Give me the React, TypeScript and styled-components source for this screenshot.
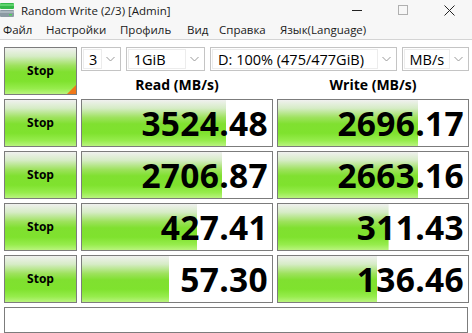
import React from "react";
import styled, { createGlobalStyle } from "styled-components";

const GlobalStyle = createGlobalStyle`
  html, body { margin: 0; padding: 0; background: #ffffff; }
  body { font-family: "Open Sans", "Noto Sans", "DejaVu Sans", sans-serif; color: #000; overflow: hidden; }
`;

const GREEN = `linear-gradient(to bottom, #f0f1ef 0%, #d6ecc6 18%, #9ee25e 38%, #80e030 52%, #7fe22e 72%, #96ec4c 88%, #b9f47e 100%)`;

const Window = styled.div`
  width: 472px;
  height: 333px;
  display: flex;
  flex-direction: column;
  background: #ffffff;
  overflow: hidden;
`;

const TitleBar = styled.div`
  height: 20px;
  display: flex;
  align-items: center;
  background: #f7f7f7;
`;

const AppIcon = styled.svg`
  width: 15px;
  height: 16px;
  margin-left: 0;
  flex: none;
`;

const Title = styled.div`
  margin-left: 6px;
  font-size: 11.5px;
  color: #1a1a1a;
  flex: 1;
  white-space: nowrap;
`;

const Controls = styled.div`
  display: flex;
  align-items: center;
  gap: 0;
  height: 20px;
`;

const ControlBtn = styled.div<{ $w: number }>`
  width: ${(p) => p.$w}px;
  height: 20px;
  display: flex;
  align-items: center;
  justify-content: center;
`;

const MenuBar = styled.div`
  height: 20px;
  display: flex;
  align-items: center;
  background: #f7f7f7;
  border-bottom: 1px solid #d4d4d4;
  padding-left: 3px;
  gap: 0;
`;

const MenuItem = styled.span<{ $w: number }>`
  width: ${(p) => p.$w}px;
  font-size: 11.5px;
  color: #1a1a1a;
  white-space: nowrap;
`;

const Main = styled.div`
  flex: 1;
  display: grid;
  grid-template-columns: 73px 192px 192px;
  grid-template-rows: 48px repeat(4, 48px) 26px;
  column-gap: 4px;
  row-gap: 4px;
  padding: 7px 0 0 4px;
`;

const StopButton = styled.div<{ $corner?: boolean }>`
  position: relative;
  box-sizing: border-box;
  border: 1px solid #7c7c7c;
  background: ${GREEN};
  display: flex;
  align-items: center;
  justify-content: center;
  font-size: 12px;
  font-weight: 700;
  padding-bottom: 1px;
`;

const Corner = styled.div`
  position: absolute;
  right: 0;
  bottom: 0;
  width: 0;
  height: 0;
  border-style: solid;
  border-width: 0 0 9px 9px;
  border-color: transparent transparent #f07818 transparent;
`;

const ControlArea = styled.div`
  grid-column: 2 / span 2;
  display: flex;
  flex-direction: column;
`;

const ComboRow = styled.div`
  display: flex;
  gap: 5px;
  height: 24px;
`;

const Combo = styled.div<{ $w: number }>`
  width: ${(p) => p.$w}px;
  box-sizing: border-box;
  border: 1px solid #c4c4c4;
  background: #fff;
  display: flex;
  align-items: center;
  padding: 1px;
`;

const ComboText = styled.div`
  flex: 1;
  height: 100%;
  box-sizing: border-box;
  border: 1px solid #ececec;
  display: flex;
  align-items: center;
  padding-left: 5px;
  font-size: 14.5px;
  white-space: nowrap;
  overflow: hidden;
`;

const Chevron = styled.svg`
  width: 17px;
  height: 10px;
  flex: none;
`;

const HeaderRow = styled.div`
  flex: 1;
  display: grid;
  grid-template-columns: 192px 192px;
  column-gap: 4px;
  align-items: center;
`;

const Header = styled.div`
  text-align: center;
  font-size: 14px;
  font-weight: 700;
  padding-top: 2px;
`;

const Meter = styled.div`
  box-sizing: border-box;
  border: 1px solid #7c7c7c;
  background-color: #fff;
  background-image: ${GREEN};
  background-repeat: no-repeat;
  display: flex;
  align-items: center;
  justify-content: flex-end;
  padding: 2px 4px 0 0;
  font-size: 33.5px;
  font-weight: 700;
  letter-spacing: 0.3px;
  line-height: 1;
`;

const StatusBar = styled.div`
  grid-column: 1 / span 3;
  box-sizing: border-box;
  border: 1px solid #7c7c7c;
  background: #fff;
  width: 464px;
`;

const results: [number, number][] = [
  [3524.48, 2696.17],
  [2706.87, 2663.16],
  [427.41, 311.43],
  [57.3, 136.46],
];

const ratio = (v: number) => Math.max(0, Math.min(1, Math.log10(v * 10) / 6));

const MeterCell = ({ value }: { value: number }) => (
  <Meter style={{ backgroundSize: `${(ratio(value) * 190).toFixed(1)}px 100%` }}>
    {value.toFixed(2)}
  </Meter>
);

const ChevronIcon = () => (
  <Chevron viewBox="0 0 17 10">
    <polyline points="4.5,3 8.5,7 12.5,3" fill="none" stroke="#9a9a9a" strokeWidth="1" />
  </Chevron>
);

export default function App() {
  return (
    <>
      <GlobalStyle />
      <Window>
        <TitleBar>
          <AppIcon viewBox="0 0 15 16">
            <rect x="0" y="1" width="14" height="6" rx="1" fill="#35b84a" />
            <rect x="0" y="2" width="14" height="2" fill="#5fd36d" />
            <rect x="0" y="8" width="14" height="7" rx="1" fill="#8c9aa3" />
            <rect x="0" y="9" width="14" height="2" fill="#aab6bd" />
            <rect x="9" y="12" width="3" height="1.5" fill="#4cd35a" />
          </AppIcon>
          <Title>Random Write (2/3) [Admin]</Title>
          <Controls>
            <ControlBtn $w={46}>
              <svg width="10" height="10" viewBox="0 0 10 10">
                <line x1="0" y1="5.5" x2="10" y2="5.5" stroke="#222" strokeWidth="1" />
              </svg>
            </ControlBtn>
            <ControlBtn $w={46}>
              <svg width="10" height="10" viewBox="0 0 10 10">
                <rect x="0.5" y="0.5" width="9" height="9" fill="none" stroke="#b0b0b0" strokeWidth="1" />
              </svg>
            </ControlBtn>
            <ControlBtn $w={46}>
              <svg width="11" height="11" viewBox="0 0 11 11">
                <path d="M0.5 0.5 L10.5 10.5 M10.5 0.5 L0.5 10.5" stroke="#222" strokeWidth="1" />
              </svg>
            </ControlBtn>
          </Controls>
        </TitleBar>
        <MenuBar>
          <MenuItem $w={43}>Файл</MenuItem>
          <MenuItem $w={74}>Настройки</MenuItem>
          <MenuItem $w={67}>Профиль</MenuItem>
          <MenuItem $w={32}>Вид</MenuItem>
          <MenuItem $w={61}>Справка</MenuItem>
          <MenuItem $w={100}>Язык(Language)</MenuItem>
        </MenuBar>
        <Main>
          <StopButton>
            Stop
            <Corner />
          </StopButton>
          <ControlArea>
            <ComboRow>
              <Combo $w={40}>
                <ComboText>3</ComboText>
                <ChevronIcon />
              </Combo>
              <Combo $w={80}>
                <ComboText>1GiB</ComboText>
                <ChevronIcon />
              </Combo>
              <Combo $w={188}>
                <ComboText>D: 100% (475/477GiB)</ComboText>
                <ChevronIcon />
              </Combo>
              <Combo $w={68}>
                <ComboText>MB/s</ComboText>
                <ChevronIcon />
              </Combo>
            </ComboRow>
            <HeaderRow>
              <Header>Read (MB/s)</Header>
              <Header>Write (MB/s)</Header>
            </HeaderRow>
          </ControlArea>
          {results.map(([r, w], i) => (
            <React.Fragment key={i}>
              <StopButton>Stop</StopButton>
              <MeterCell value={r} />
              <MeterCell value={w} />
            </React.Fragment>
          ))}
          <StatusBar />
        </Main>
      </Window>
    </>
  );
}
